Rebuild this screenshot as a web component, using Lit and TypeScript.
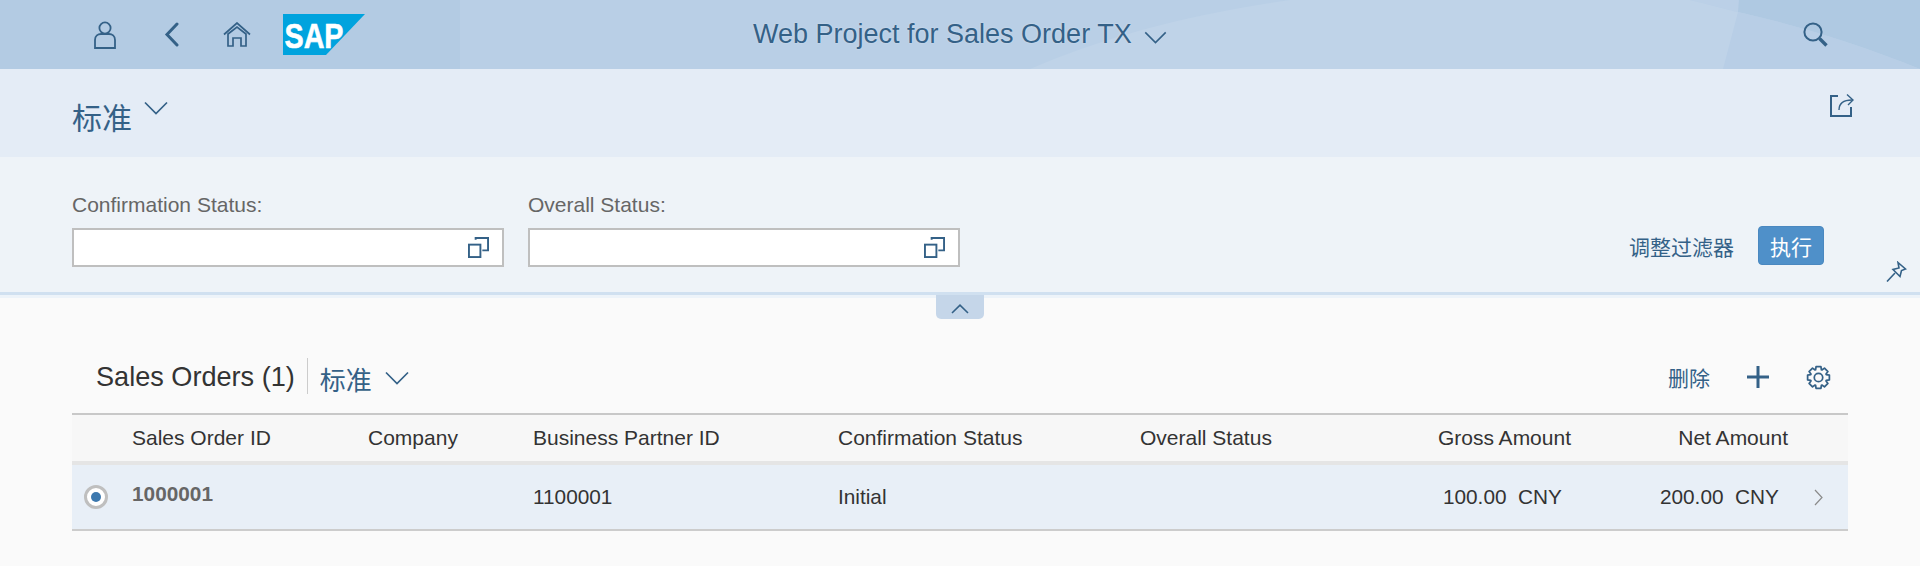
import { LitElement, html, css, svg } from 'lit';
import { customElement } from 'lit/decorators.js';

const chevronDown = html`<svg class="chev" viewBox="0 0 24 14"><path d="M1 1.5 12 12.5 23 1.5" fill="none" stroke="currentColor" stroke-width="1.7"/></svg>`;

const valueHelp = html`<svg class="vh" viewBox="0 0 22 22">
  <path d="M8 3V1h13v13h-6" fill="none" stroke="currentColor" stroke-width="2"/>
  <rect x="1" y="8" width="12" height="13" fill="none" stroke="currentColor" stroke-width="2"/>
</svg>`;

const columns = [
  { label: 'Sales Order ID', end: false },
  { label: 'Company', end: false },
  { label: 'Business Partner ID', end: false },
  { label: 'Confirmation Status', end: false },
  { label: 'Overall Status', end: false },
  { label: 'Gross Amount', end: true },
  { label: 'Net Amount', end: true },
];

// eight rounded teeth around the centre of a 26x26 box
function gearPath() {
  const pts: string[] = [];
  for (let i = 0; i < 8; i++) {
    const a = (i * Math.PI) / 4;
    const spots: [number, number][] = [
      [8.6, a - 0.36],
      [11.6, a - 0.22],
      [11.6, a + 0.22],
      [8.6, a + 0.36],
    ];
    for (const [r, t] of spots) {
      pts.push(`${(13 + r * Math.cos(t)).toFixed(2)} ${(13 + r * Math.sin(t)).toFixed(2)}`);
    }
  }
  return `M${pts.join('L')}Z`;
}

@customElement('app-root')
export class AppRoot extends LitElement {
  static styles = css`
    :host {
      display: block;
      height: 566px;
      overflow: hidden;
      background: #fafafa;
      color: #346187;
      font-family: 'Liberation Sans', 'Noto Sans CJK SC', sans-serif;
    }

    /* shell bar */
    .shell {
      position: relative;
      height: 69px;
      display: flex;
      align-items: center;
      background: #b9cfe6;
      overflow: hidden;
    }
    .shell-bg { position: absolute; inset: 0; width: 100%; height: 100%; }
    .shell > *:not(.shell-bg) { position: relative; }
    .shell-left { width: 560px; display: flex; align-items: center; height: 100%; padding-left: 94px; box-sizing: border-box; }
    .i-user { width: 22px; height: 28px; margin-right: 48px; }
    .i-back { width: 15px; height: 25px; margin-right: 44px; }
    .i-home { width: 28px; height: 25px; margin-right: 32px; }
    .logo { width: 82px; height: 41px; margin-top: -1px; }
    .logo text { font: bold 35px 'Liberation Sans', sans-serif; fill: #fff; stroke: #fff; stroke-width: 0.6px; }
    .app-title {
      flex: 1;
      display: flex;
      align-items: center;
      padding-left: 193px;
      font-size: 27px;
      text-shadow: 0 0 2px rgba(255, 255, 255, 0.45);
    }
    .app-title .chev { width: 23px; height: 13px; margin: 5px 0 0 12px; }
    .i-search { width: 25px; height: 25px; margin-right: 92px; }

    /* variant header */
    .variant {
      height: 88px;
      display: flex;
      justify-content: space-between;
      background: #e4ecf6;
      padding: 0 66px 0 72px;
    }
    .variant-name { display: flex; align-items: flex-start; padding-top: 30px; font-size: 30px; line-height: 40px; }
    .variant-name .chev { width: 26px; height: 14px; margin: 2px 0 0 11px; }
    .i-share { width: 24px; height: 24px; margin-top: 24px; }

    /* filter bar */
    .filters {
      position: relative;
      height: 135px;
      box-sizing: border-box;
      display: flex;
      align-items: flex-start;
      background: #eef3f8;
      padding: 36px 96px 0 72px;
    }
    .field { width: 432px; margin-right: 24px; }
    .field label { display: block; height: 35px; font-size: 21px; line-height: 23px; color: #666; }
    .input {
      height: 39px;
      box-sizing: border-box;
      display: flex;
      align-items: center;
      justify-content: flex-end;
      background: #fff;
      border: 2px solid #bfbfbf;
      padding-right: 13px;
    }
    .vh { width: 21px; height: 21px; }
    .filter-actions { margin-left: auto; display: flex; align-items: center; gap: 24px; margin-top: 33px; font-size: 21px; }
    .go {
      width: 66px;
      height: 39px;
      box-sizing: border-box;
      display: flex;
      align-items: center;
      justify-content: center;
      background: #4f90c9;
      border: 1px solid #4a88c0;
      border-radius: 4px;
      color: #fff;
    }
    .i-pin { position: absolute; left: 1886px; top: 104px; width: 21px; height: 21px; }

    .divider { height: 6px; box-sizing: border-box; border-top: 3px solid #d0e0f0; background: #edf3f9; }
    .collapse {
      position: absolute;
      left: 936px;
      top: 295px;
      width: 48px;
      height: 24px;
      display: flex;
      align-items: center;
      justify-content: center;
      background: #c5d6e9;
      border-radius: 0 0 5px 5px;
    }
    .collapse svg { width: 18px; height: 10px; margin-top: 4px; }

    /* table */
    .table-area { padding: 0 72px; }
    .toolbar { height: 115px; box-sizing: border-box; display: flex; align-items: center; padding: 41px 17px 0 24px; }
    .tb-title { font-size: 27.1px; color: #333; margin-top: 2px; }
    .tb-sep { width: 1px; height: 36px; background: #ccc; margin: 0 12px; }
    .tb-variant { display: flex; align-items: center; font-size: 26px; margin-top: 4px; }
    .tb-variant .chev { width: 26px; height: 14px; margin: 0 0 0 12px; }
    .tb-actions { margin-left: auto; display: flex; align-items: center; font-size: 21px; margin-top: 2px; }
    .i-plus { width: 22px; height: 22px; margin: 0 37px; }
    .i-gear { width: 25px; height: 25px; }

    .grid {
      display: grid;
      grid-template-columns: 60px 236px 165px 305px 302px 220px 211px 217px 60px;
      align-items: center;
      color: #333;
      font-size: 21px;
    }
    .head { height: 52px; box-sizing: border-box; border-top: 2px solid #c8c8c8; border-bottom: 4px solid #e5e5e5; background: #f7f7f7; }
    .row { height: 66px; box-sizing: border-box; border-bottom: 2px solid #ccc; background: #e8eff7; font-size: 20.8px; line-height: 24px; }
    .end { text-align: right; }
    .row .end { padding-right: 9px; white-space: pre; }
    .radio {
      width: 24px;
      height: 24px;
      box-sizing: border-box;
      margin-left: 12px;
      border: 3px solid #bfbfbf;
      border-radius: 50%;
      background: #fff;
      display: flex;
      align-items: center;
      justify-content: center;
    }
    .radio::after { content: ''; width: 10px; height: 10px; border-radius: 50%; background: #3c78ae; }
    .id { font-weight: bold; color: #666; font-size: 20.8px; margin-top: -6px; }
    .nav { width: 9px; height: 17px; margin-left: 26px; color: #8a8a8a; }
  `;

  private shellDecor() {
    return svg`<svg class="shell-bg" viewBox="0 0 1920 69" preserveAspectRatio="none">
      <rect x="0" y="0" width="460" height="69" fill="#b3cbe3"/>
      <path d="M1030 69 C1100 38 1190 14 1290 0 L1690 0 C1780 22 1860 48 1920 69 Z" fill="#bfd3e8"/>
      <path d="M1690 0 L1739 0 L1738 12 Z" fill="#bbd0e7"/>
      <path d="M1739 0 L1920 0 L1920 69 C1860 45 1800 26 1738 12 Z" fill="#afc9e2"/>
      <path d="M1723 69 L1738 12 C1800 26 1860 45 1920 69 Z" fill="#b8cee6"/>
    </svg>`;
  }

  render() {
    return html`
      <header class="shell">
        ${this.shellDecor()}
        <div class="shell-left">
          <svg class="i-user" viewBox="0 0 22 28" fill="none" stroke="currentColor" stroke-width="1.8">
            <circle cx="11" cy="7" r="5.6"/>
            <path d="M1 27V19c0-4 3-6 6-6h8c3 0 6 2 6 6v8z"/>
          </svg>
          <svg class="i-back" viewBox="0 0 15 25"><path d="M13 2 3 12.5 13 23" fill="none" stroke="currentColor" stroke-width="3" stroke-linecap="round"/></svg>
          <svg class="i-home" viewBox="0 0 28 25" fill="none" stroke="currentColor" stroke-width="1.7">
            <path d="M1 12.5 14 1l13 11.5"/>
            <path d="M5 12 14 5l9 7v12h-5v-8h-8v8H5z"/>
          </svg>
          <svg class="logo" viewBox="0 0 82 41">
            <polygon points="0,0 82,0 43,41 0,41" fill="#00a3de"/>
            <text x="1.500" y="33.500" textLength="59" lengthAdjust="spacingAndGlyphs">SAP</text>
          </svg>
        </div>
        <div class="app-title">Web Project for Sales Order TX ${chevronDown}</div>
        <svg class="i-search" viewBox="0 0 25 25" fill="none" stroke="currentColor">
          <circle cx="10" cy="10" r="8.6" stroke-width="2"/>
          <path d="M16.5 16.5 23.5 23.5" stroke-width="3.4"/>
        </svg>
      </header>

      <section class="variant">
        <div class="variant-name">标准 ${chevronDown}</div>
        <svg class="i-share" viewBox="0 0 24 24" fill="none" stroke="currentColor" stroke-width="2">
          <path d="M8 3H1v20h20V14"/>
          <path d="M9 17c0-6 4-10 13-10" stroke-width="1.4"/>
          <path d="M17 1.5 23 7l-5 5" stroke-width="1.4"/>
        </svg>
      </section>

      <section class="filters">
        <div class="field"><label>Confirmation Status:</label><div class="input">${valueHelp}</div></div>
        <div class="field"><label>Overall Status:</label><div class="input">${valueHelp}</div></div>
        <div class="filter-actions">
          <span>调整过滤器</span>
          <span class="go">执行</span>
        </div>
        <svg class="i-pin" viewBox="0 0 21 21" fill="none" stroke="currentColor" stroke-width="1.6">
          <path d="M12 1.5 19.500 8l-4 1.500-1.500 6-7-7 6-1.500z"/>
          <path d="M9 12 1 20.500"/>
        </svg>
      </section>
      <div class="divider"></div>
      <div class="collapse">
        <svg viewBox="0 0 18 10"><path d="M1 9 9 1.200 17 9" fill="none" stroke="currentColor" stroke-width="1.600"/></svg>
      </div>

      <section class="table-area">
        <div class="toolbar">
          <span class="tb-title">Sales Orders (1)</span>
          <span class="tb-sep"></span>
          <span class="tb-variant">标准 ${chevronDown}</span>
          <div class="tb-actions">
            <span>删除</span>
            <svg class="i-plus" viewBox="0 0 22 22"><path d="M11 0v22M0 11h22" stroke="currentColor" stroke-width="3"/></svg>
            <svg class="i-gear" viewBox="0 0 26 26" fill="none" stroke="currentColor" stroke-width="1.800" stroke-linejoin="round">
              <circle cx="13" cy="13" r="4.400"/>
              <path d=${gearPath()}/>
            </svg>
          </div>
        </div>

        <div class="grid head">
          <span></span>
          ${columns.map((c) => html`<span class=${c.end ? 'end' : ''}>${c.label}</span>`)}
          <span></span>
        </div>
        <div class="grid row">
          <span class="radio"></span>
          <span class="id">1000001</span>
          <span></span>
          <span>1100001</span>
          <span>Initial</span>
          <span></span>
          <span class="end">100.00  CNY</span>
          <span class="end">200.00  CNY</span>
          <svg class="nav" viewBox="0 0 9 17"><path d="M1 1l7 7.500-7 7.500" fill="none" stroke="currentColor" stroke-width="1.200"/></svg>
        </div>
      </section>
    `;
  }
}
